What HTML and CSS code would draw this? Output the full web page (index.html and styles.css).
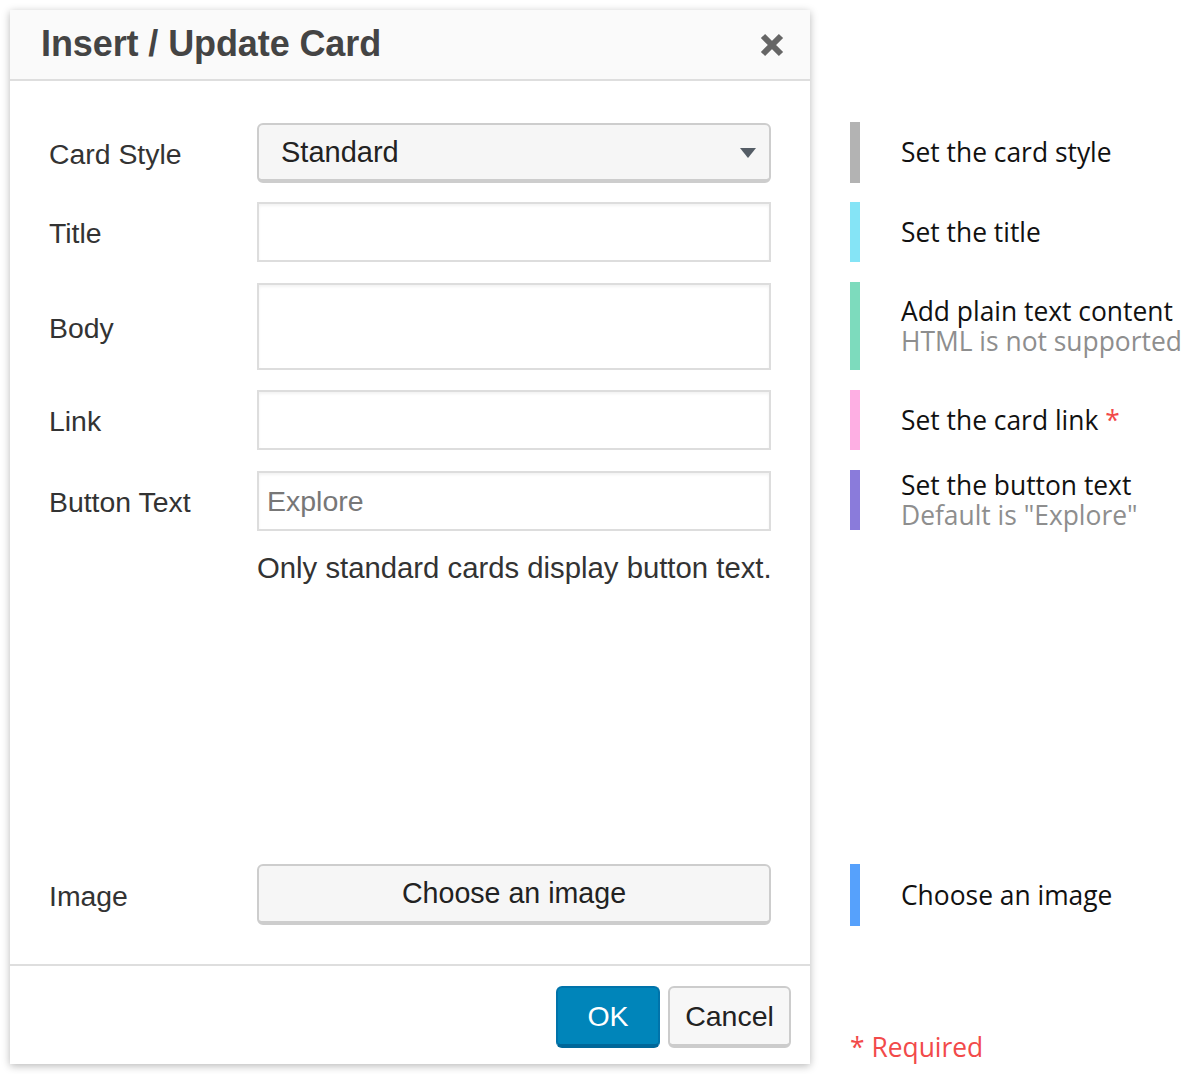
FILE: index.html
```html
<!DOCTYPE html>
<html>
<head>
<meta charset="utf-8">
<link rel="stylesheet" href="styles.css">
</head>
<body>
<div class="page">
  <div class="dialog">
    <div class="dlg-head">
      <h1 class="dlg-title">Insert / Update Card</h1>
      <svg class="close" width="24" height="24" viewBox="0 0 24 24"><path d="M3 3 L21 21 M21 3 L3 21" stroke="#666" stroke-width="6" stroke-linecap="butt"/></svg>
    </div>
    <div class="dlg-body">
      <div class="form">
        <div class="row r-select">
          <label class="lbl">Card Style</label>
          <div class="select"><span>Standard</span><span class="caret"></span></div>
        </div>
        <div class="row r-title">
          <label class="lbl">Title</label>
          <div class="input"></div>
        </div>
        <div class="row r-body">
          <label class="lbl">Body</label>
          <div class="input tall"></div>
        </div>
        <div class="row r-link">
          <label class="lbl">Link</label>
          <div class="input"></div>
        </div>
        <div class="row r-btn">
          <label class="lbl">Button Text</label>
          <div class="input"><span class="ph">Explore</span></div>
        </div>
        <div class="row r-help">
          <span></span>
          <p class="help">Only standard cards display button text.</p>
        </div>
      </div>
      <div class="row r-image">
        <label class="lbl">Image</label>
        <div class="btn-choose">Choose an image</div>
      </div>
    </div>
    <div class="dlg-foot">
      <div class="btn btn-ok">OK</div>
      <div class="btn btn-cancel">Cancel</div>
    </div>
  </div>
  <div class="notes">
    <div class="note n1"><span class="bar gray"></span><div class="note-text">Set the card style</div></div>
    <div class="note n2"><span class="bar cyan"></span><div class="note-text">Set the title</div></div>
    <div class="note n3"><span class="bar green"></span><div class="note-text">Add plain text content<br><span class="sub">HTML is not supported</span></div></div>
    <div class="note n4"><span class="bar pink"></span><div class="note-text">Set the card link <span class="req">*</span></div></div>
    <div class="note n5"><span class="bar purple"></span><div class="note-text">Set the button text<br><span class="sub">Default is "Explore"</span></div></div>
    <div class="spacer"></div>
    <div class="note n6"><span class="bar blue"></span><div class="note-text">Choose an image</div></div>
    <div class="required">* Required</div>
  </div>
</div>
</body>
</html>
```

FILE: styles.css
```css
* { box-sizing: border-box; }
html, body { margin: 0; padding: 0; background: #fff; }
body { width: 1200px; height: 1074px; overflow: hidden; }

.page {
  display: flex;
  padding: 10px 0 0 10px;
}

.dialog {
  width: 800px;
  height: 1054px;
  background: #fff;
  box-shadow: 0 2px 8px rgba(0,0,0,0.28);
  display: flex;
  flex-direction: column;
  font-family: "Liberation Sans", Arial, sans-serif;
  color: #333;
}

.dlg-head {
  height: 71px;
  background: #fafafa;
  border-bottom: 2px solid #dedede;
  display: flex;
  align-items: center;
  justify-content: space-between;
  padding: 0 26px 0 31px;
}
.dlg-title {
  margin: 0;
  font-size: 36px;
  font-weight: bold;
  color: #444;
  letter-spacing: -0.1px;
  line-height: 1;
  padding-bottom: 2px;
}
.close { display: block; }

.dlg-body {
  flex: 1;
  display: flex;
  flex-direction: column;
  justify-content: space-between;
  padding: 42px 39px 39px 39px;
}

.row {
  display: grid;
  grid-template-columns: 208px 514px;
  align-items: center;
}
.lbl {
  font-size: 28.4px;
  padding-top: 3px;
  color: #333;
}
.r-title { margin-top: 19px; }
.r-body { margin-top: 21px; }
.r-link { margin-top: 20px; }
.r-btn { margin-top: 21px; }
.r-help { margin-top: 19px; }

.select {
  height: 60px;
  background: #f6f6f6;
  border: 2px solid #cdcdcd;
  border-bottom-width: 4px;
  border-radius: 6px;
  display: flex;
  align-items: center;
  justify-content: space-between;
  padding: 0 13px 0 22px;
  font-size: 29px;
  color: #222;
}
.caret {
  width: 0; height: 0;
  border-left: 8px solid transparent;
  border-right: 8px solid transparent;
  border-top: 10px solid #555d66;
  margin-top: 2px;
}

.input {
  height: 60px;
  background: #fff;
  border: 2px solid #ddd;
  box-shadow: inset 0 2px 3px rgba(0,0,0,0.05);
  display: flex;
  align-items: center;
  padding: 0 8px;
}
.input.tall { height: 87px; }
.ph { font-size: 28.5px; color: #777; }

.help {
  margin: 0;
  font-size: 29.3px;
  line-height: 36px;
  color: #333;
  white-space: nowrap;
}

.btn-choose {
  height: 61px;
  background: #f6f6f6;
  border: 2px solid #cdcdcd;
  border-bottom-width: 4px;
  border-radius: 6px;
  display: flex;
  align-items: center;
  justify-content: center;
  font-size: 28.6px;
  color: #222;
}

.dlg-foot {
  border-top: 2px solid #dedede;
  height: 100px;
  display: flex;
  justify-content: flex-end;
  align-items: flex-start;
  gap: 8px;
  padding: 20px 19px 0 0;
}
.btn {
  height: 62px;
  border-radius: 6px;
  display: flex;
  align-items: center;
  justify-content: center;
  font-size: 28.5px;
  border: 2px solid;
  border-bottom-width: 4px;
}
.btn-ok {
  width: 104px;
  background: #0085ba;
  border-color: #0073aa #0073aa #006799;
  color: #fff;
}
.btn-cancel {
  width: 123px;
  background: #f7f7f7;
  border-color: #ccc;
  color: #222;
}

.notes {
  margin-left: 40px;
  display: flex;
  flex-direction: column;
  font-family: "Open Sans", "Noto Sans", sans-serif;
  font-size: 26.4px;
  color: #111;
  height: 1064px;
  padding-top: 112px;
}
.note {
  display: flex;
  align-items: center;
  height: 61px;
}
.n2 { margin-top: 19px; height: 60px; }
.n3 { margin-top: 20px; height: 88px; }
.n4 { margin-top: 20px; height: 60px; }
.n5 { margin-top: 20px; height: 60px; }
.spacer { height: 334px; }
.n6 { height: 62px; }
.bar {
  width: 10px;
  align-self: stretch;
  flex: none;
}
.note-text {
  margin-left: 41px;
  line-height: 30px;
  white-space: nowrap;
}
.n1 .note-text { margin-top: -2px; }
.sub { color: #8e8e8e; }
.req { color: #f24a4a; }
.gray { background: #b3b3b3; }
.cyan { background: #85e4f6; }
.green { background: #7ddbbd; }
.pink { background: #feaee3; }
.purple { background: #8a7bdb; }
.blue { background: #56a1fc; }

.required {
  margin-top: 106px;
  color: #f24a4a;
  line-height: 30px;
}
```
